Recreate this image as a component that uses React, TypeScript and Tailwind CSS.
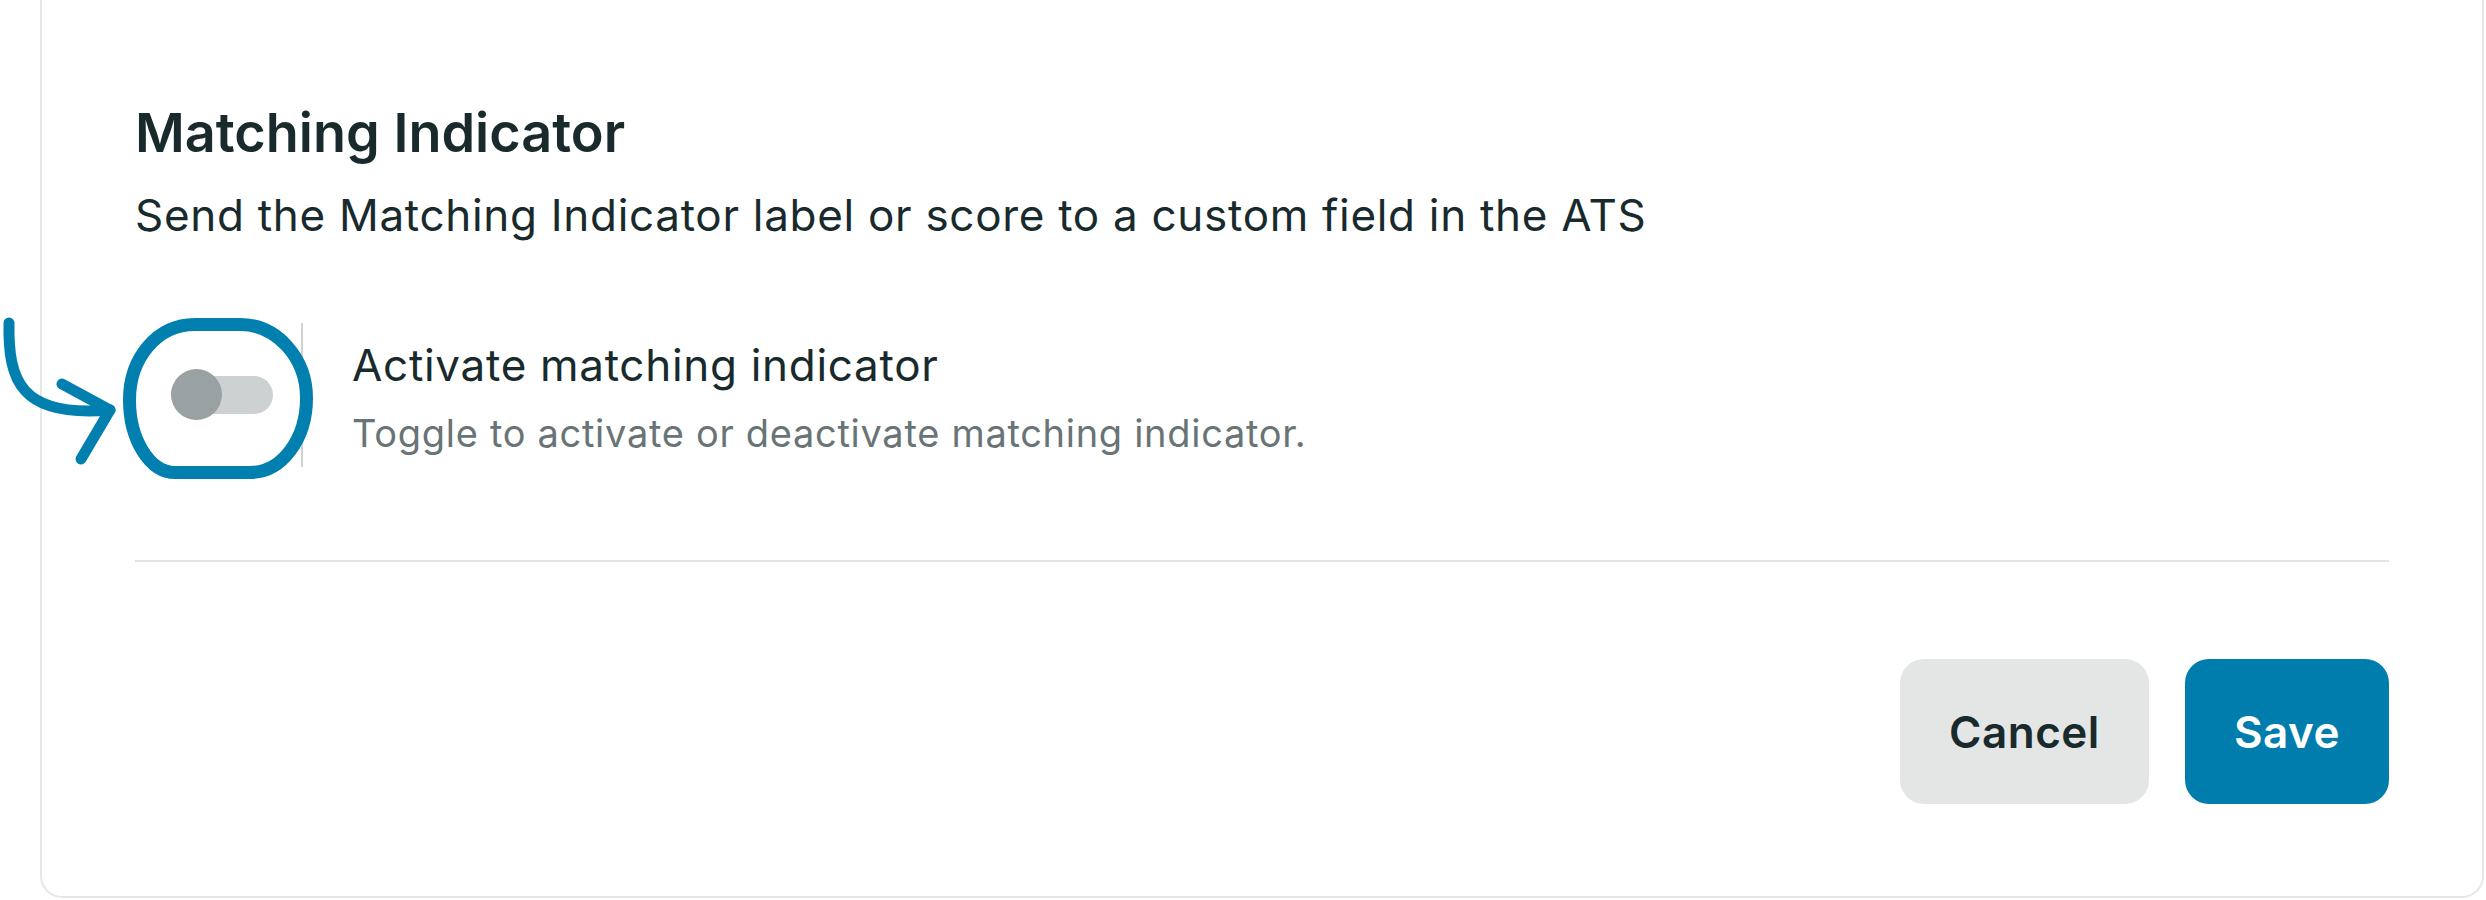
import React from "react";

function Toggle() {
  return (
    <div className="flex h-[144px] w-[168px] shrink-0 items-center border-r-2 border-[#cfd2d2] pl-[36px]">
      <div className="relative h-[38px] w-[102px] rounded-full bg-[#cdd1d2]">
        <div className="absolute left-0 top-[-7px] h-[51px] w-[51px] rounded-full bg-[#9aa1a2]" />
      </div>
    </div>
  );
}

function Annotation() {
  return (
    <svg
      className="pointer-events-none absolute left-0 top-0"
      width="330"
      height="500"
      viewBox="0 0 330 500"
      fill="none"
      stroke="#017fae"
      strokeLinecap="round"
      strokeLinejoin="round"
    >
      {/* hand-drawn ring around the switch */}
      <path
        strokeWidth="13"
        d="M195 324.5 L240 324.5 C277 324.5 306.5 358 306.5 398 C306.5 439 282 472.5 250 472.5 L175 472.5 C150 472.5 129.5 440 129.5 400 C129.5 358 157 324.5 195 324.5 Z"
      />
      {/* curved arrow pointing at it */}
      <path strokeWidth="11" d="M9 323 C8 380 20 418 110 410" />
      <path strokeWidth="11" d="M62 384 L110 410 L81 459" />
    </svg>
  );
}

export default function App() {
  return (
    <div
      className="relative h-[900px] w-[2486px] overflow-hidden bg-white"
      style={{ fontFamily: "Inter, 'Noto Sans', sans-serif" }}
    >
      <div className="ml-[40px] mr-[2px] flex h-[898px] flex-col rounded-b-[22px] border-2 border-t-0 border-[#e5e7e7] bg-white px-[93px] pt-[106px]">
        <h2 className="text-[54px] font-semibold leading-none text-[#192a2d]">
          Matching Indicator
        </h2>
        <p className="mt-[33px] text-[44px] leading-none tracking-[0.7px] text-[#192a2d]">
          Send the Matching Indicator label or score to a custom field in the ATS
        </p>

        <div className="mt-[86px] flex items-start">
          <Toggle />
          <div className="ml-[49px] mt-[20px] flex flex-col">
            <span className="text-[44px] leading-none tracking-[0.7px] text-[#192a2d]">
              Activate matching indicator
            </span>
            <span className="mt-[27px] text-[38px] leading-none tracking-[0.7px] text-[#687476]">
              Toggle to activate or deactivate matching indicator.
            </span>
          </div>
        </div>

        <div className="mt-[93px] h-[2px] w-full bg-[#e3e5e5]" />

        <div className="mt-[97px] flex justify-end gap-[36px]">
          <button className="flex h-[145px] w-[249px] items-center justify-center rounded-[24px] bg-[#e4e6e6] text-[44px] font-semibold tracking-[0.5px] text-[#192a2d]">
            Cancel
          </button>
          <button className="flex h-[145px] w-[204px] items-center justify-center rounded-[24px] bg-[#007dac] text-[44px] font-semibold tracking-[0.5px] text-white">
            Save
          </button>
        </div>
      </div>
      <Annotation />
    </div>
  );
}
